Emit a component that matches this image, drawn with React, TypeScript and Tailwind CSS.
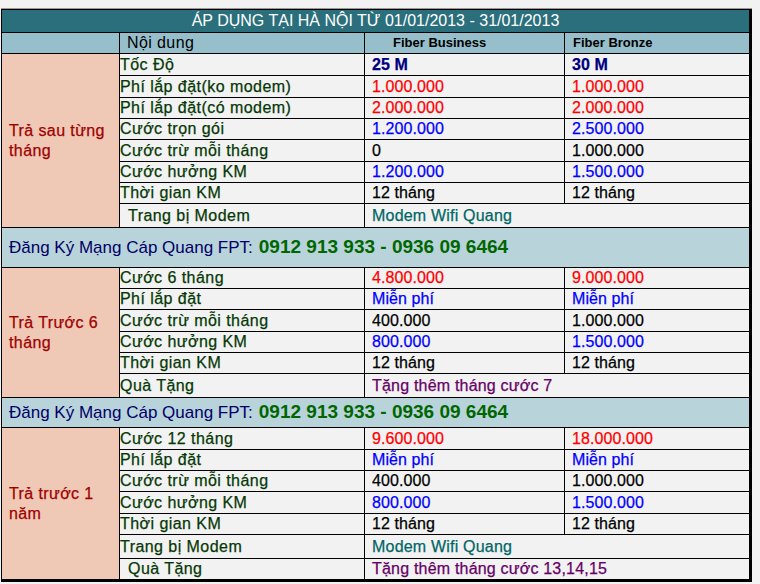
import React from 'react';

type Row = {
    h: string;
    label: string;
    indent?: boolean;
    v1?: string;
    v2?: string;
    c1?: string;
    c2?: string;
    span?: string;
    spanColor?: string;
};

type Group = {
    title: string[];
    rows: Row[];
    last?: boolean;
};

const RED = 'text-[#ff0000]';
const BLUE = 'text-[#0000ff]';
const BLACK = 'text-black';
const NAVY = 'text-[#000080] font-bold';

const groups: Group[] = [
    {
        title: ['Trả sau từng', 'tháng'],
        rows: [
            { h: 'h-[22px]', label: 'Tốc Độ', v1: '25 M', v2: '30 M', c1: NAVY, c2: NAVY },
            { h: 'h-[22px]', label: 'Phí lắp đặt(ko modem)', v1: '1.000.000', v2: '1.000.000', c1: RED, c2: RED },
            { h: 'h-[21px]', label: 'Phí lắp đặt(có modem)', v1: '2.000.000', v2: '2.000.000', c1: RED, c2: RED },
            { h: 'h-[21px]', label: 'Cước trọn gói', v1: '1.200.000', v2: '2.500.000', c1: BLUE, c2: BLUE },
            { h: 'h-[22px]', label: 'Cước trừ mỗi tháng', v1: '0', v2: '1.000.000', c1: BLACK, c2: BLACK },
            { h: 'h-[21px]', label: 'Cước hưởng KM', v1: '1.200.000', v2: '1.500.000', c1: BLUE, c2: BLUE },
            { h: 'h-[21px]', label: 'Thời gian KM', v1: '12 tháng', v2: '12 tháng', c1: BLACK, c2: BLACK },
            { h: 'h-[24px]', label: 'Trang bị Modem', indent: true, span: 'Modem Wifi Quang', spanColor: 'text-[#006666]' },
        ],
    },
    {
        title: ['Trả Trước 6', 'tháng'],
        rows: [
            { h: 'h-[21px]', label: 'Cước 6 tháng', v1: '4.800.000', v2: '9.000.000', c1: RED, c2: RED },
            { h: 'h-[21px]', label: 'Phí lắp đặt', v1: 'Miễn phí', v2: 'Miễn phí', c1: BLUE, c2: BLUE },
            { h: 'h-[22px]', label: 'Cước trừ mỗi tháng', v1: '400.000', v2: '1.000.000', c1: BLACK, c2: BLACK },
            { h: 'h-[21px]', label: 'Cước hưởng KM', v1: '800.000', v2: '1.500.000', c1: BLUE, c2: BLUE },
            { h: 'h-[21px]', label: 'Thời gian KM', v1: '12 tháng', v2: '12 tháng', c1: BLACK, c2: BLACK },
            { h: 'h-[24px]', label: 'Quà Tặng', span: 'Tặng thêm tháng cước 7', spanColor: 'text-[#660066]' },
        ],
    },
    {
        title: ['Trả trước 1', 'năm'],
        last: true,
        rows: [
            { h: 'h-[22px]', label: 'Cước 12 tháng', v1: '9.600.000', v2: '18.000.000', c1: RED, c2: RED },
            { h: 'h-[21px]', label: 'Phí lắp đặt', v1: 'Miễn phí', v2: 'Miễn phí', c1: BLUE, c2: BLUE },
            { h: 'h-[21px]', label: 'Cước trừ mỗi tháng', v1: '400.000', v2: '1.000.000', c1: BLACK, c2: BLACK },
            { h: 'h-[22px]', label: 'Cước hưởng KM', v1: '800.000', v2: '1.500.000', c1: BLUE, c2: BLUE },
            { h: 'h-[21px]', label: 'Thời gian KM', v1: '12 tháng', v2: '12 tháng', c1: BLACK, c2: BLACK },
            { h: 'h-[24px]', label: 'Trang bị Modem', span: 'Modem Wifi Quang', spanColor: 'text-[#006666]' },
            { h: 'h-[20px]', label: 'Quà Tặng', indent: true, span: 'Tặng thêm tháng cước 13,14,15', spanColor: 'text-[#660066]' },
        ],
    },
];

function Banner({ h }: { h: string }) {
    return (
        <div className={`${h} flex items-center border-b border-black bg-[#b9d3db] pl-[7px]`}>
            <span className="text-[17px] text-[#000066]">Đăng Ký Mạng Cáp Quang FPT:</span>
            <span className="ml-[6px] text-[19px] font-bold text-[#006600]">0912 913 933 - 0936 09 6464</span>
        </div>
    );
}

function PriceGroup({ group }: { group: Group }) {
    return (
        <div className="flex [-webkit-text-stroke:0.25px]">
            <div className={`flex w-[118px] shrink-0 items-center border-r border-black bg-[#efc9b6] pl-[7px] text-[16px] leading-[20px] tracking-[0.4px] text-[#a00000] ${group.last ? '' : 'border-b'}`}>
                <div>
                    {group.title.map((t) => (
                        <div key={t}>{t}</div>
                    ))}
                </div>
            </div>
            <div className="flex flex-1 flex-col">
                {group.rows.map((row, i) => {
                    const isLast = group.last && i === group.rows.length - 1;
                    return (
                        <div key={i} className={`${row.h} flex ${isLast ? '' : 'border-b border-black'}`}>
                            <div className={`flex w-[245px] shrink-0 items-center border-r border-black tracking-[0.45px] text-[#063806] ${row.indent ? 'pl-[8px]' : ''}`}>
                                {row.label}
                            </div>
                            {row.span ? (
                                <div className={`flex flex-1 items-center pl-[7px] tracking-[0.2px] ${row.spanColor}`}>{row.span}</div>
                            ) : (
                                <>
                                    <div className={`flex w-[200px] shrink-0 items-center border-r border-black pl-[7px] tracking-[0.1px] ${row.c1}`}>{row.v1}</div>
                                    <div className={`flex flex-1 items-center pl-[7px] tracking-[0.1px] ${row.c2}`}>{row.v2}</div>
                                </>
                            )}
                        </div>
                    );
                })}
            </div>
        </div>
    );
}

export default function App() {
    return (
        <div className="min-h-screen bg-[#f2f2f2] pt-2 font-['Liberation_Sans',Arial,sans-serif] text-[16px]">
            <div className="ml-px w-[751px] border-t border-[#9a9a9a]">
                <div className="border-t border-r-[3px] border-b-[3px] border-l border-black">
                    <div className="flex h-[23px] items-center justify-center border-b border-black bg-[#2b6f7c] text-[16px] text-white">
                        ÁP DỤNG TẠI HÀ NỘI TỪ 01/01/2013 - 31/01/2013
                    </div>
                    <div className="flex h-[21px] border-b border-black bg-[#96bfcb]">
                        <div className="w-[118px] shrink-0 border-r border-black" />
                        <div className="flex w-[245px] shrink-0 items-center border-r border-black pl-[7px] tracking-[0.4px] text-black">Nội dung</div>
                        <div className="flex w-[200px] shrink-0 items-center border-r border-black pl-[28px] text-[13px] font-bold text-black">Fiber Business</div>
                        <div className="flex flex-1 items-center pl-[8px] text-[13px] font-bold text-black">Fiber Bronze</div>
                    </div>
                    <PriceGroup group={groups[0]} />
                    <Banner h="h-[40px]" />
                    <PriceGroup group={groups[1]} />
                    <Banner h="h-[30px]" />
                    <PriceGroup group={groups[2]} />
                </div>
            </div>
        </div>
    );
}
